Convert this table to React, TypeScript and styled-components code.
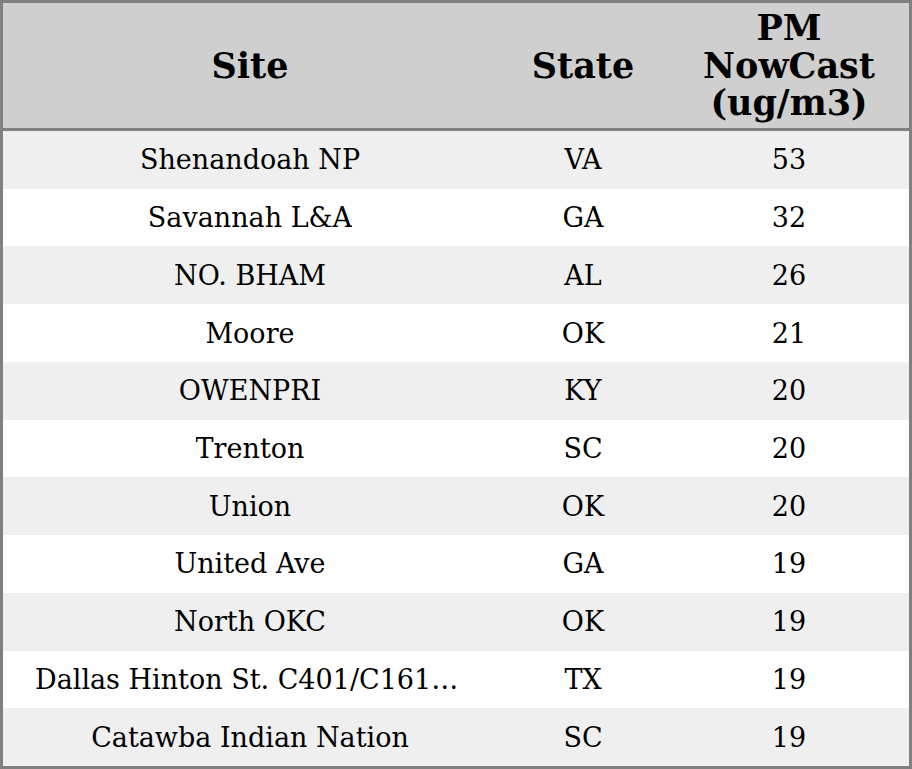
import React from 'react';
import styled, { createGlobalStyle } from 'styled-components';

interface Reading {
  site: string;
  state: string;
  value: number;
}

const readings: Reading[] = [
  { site: 'Shenandoah NP', state: 'VA', value: 53 },
  { site: 'Savannah L&A', state: 'GA', value: 32 },
  { site: 'NO. BHAM', state: 'AL', value: 26 },
  { site: 'Moore', state: 'OK', value: 21 },
  { site: 'OWENPRI', state: 'KY', value: 20 },
  { site: 'Trenton', state: 'SC', value: 20 },
  { site: 'Union', state: 'OK', value: 20 },
  { site: 'United Ave', state: 'GA', value: 19 },
  { site: 'North OKC', state: 'OK', value: 19 },
  { site: 'Dallas Hinton St. C401/C161/C312', state: 'TX', value: 19 },
  { site: 'Catawba Indian Nation', state: 'SC', value: 19 },
];

const GlobalStyle = createGlobalStyle`
  html, body {
    margin: 0;
    padding: 0;
    background: #ffffff;
  }
  * {
    box-sizing: border-box;
  }
`;

const Table = styled.div`
  height: 769px;
  width: 912px;
  border: 3px solid #808080;
  display: grid;
  grid-template-columns: 494px 172px 1fr;
  grid-template-rows: 128px repeat(11, 1fr);
  font-family: 'DejaVu Serif', 'Liberation Serif', serif;
  color: #000;
`;

const HeadCell = styled.div`
  background: #cfcfcf;
  border-bottom: 3px solid #808080;
  display: flex;
  align-items: center;
  justify-content: center;
  text-align: center;
  font-size: 35px;
  font-weight: bold;
  line-height: 37.5px;
  padding: 0 16px;
`;

const Cell = styled.div<{ $shaded: boolean }>`
  background: ${p => (p.$shaded ? '#efefef' : '#ffffff')};
  display: flex;
  align-items: center;
  justify-content: center;
  font-size: 27px;
  padding: 0 32px;
  min-width: 0;
`;

const SiteText = styled.span`
  white-space: nowrap;
  overflow: hidden;
  text-overflow: ellipsis;
`;

export default function App() {
  return (
    <>
      <GlobalStyle />
      <Table>
        <HeadCell>Site</HeadCell>
        <HeadCell>State</HeadCell>
        <HeadCell>PM NowCast (ug/m3)</HeadCell>
        {readings.map((r, i) => (
          <React.Fragment key={i}>
            <Cell $shaded={i % 2 === 0}>
              <SiteText>{r.site}</SiteText>
            </Cell>
            <Cell $shaded={i % 2 === 0}>{r.state}</Cell>
            <Cell $shaded={i % 2 === 0}>{r.value}</Cell>
          </React.Fragment>
        ))}
      </Table>
    </>
  );
}
